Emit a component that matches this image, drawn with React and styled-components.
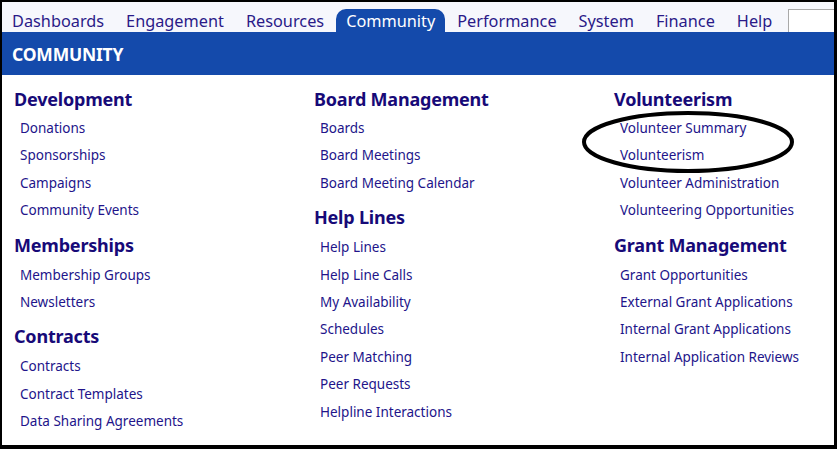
import styled, { createGlobalStyle } from 'styled-components';

const GlobalStyle = createGlobalStyle`
  html, body {
    margin: 0;
    padding: 0;
    background: #ffffff;
  }
  body {
    font-family: 'Noto Sans', 'Open Sans', sans-serif;
  }
`;

const Frame = styled.div`
  position: relative;
  box-sizing: border-box;
  width: 837px;
  height: 449px;
  border-top: 2px solid #000;
  border-left: 2px solid #000;
  border-right: 3px solid #000;
  border-bottom: 4px solid #000;
  overflow: hidden;
`;

const NavBar = styled.div`
  display: flex;
  align-items: flex-end;
  height: 30px;
  background: #f6f7fc;
`;

const NavItem = styled.div`
  height: 23px;
  padding: 0 10px;
  margin-right: 2px;
  font-size: 16.3px;
  line-height: 24px;
  color: ${(p) => (p.$active ? '#ffffff' : '#2a1a88')};
  background: ${(p) => (p.$active ? '#144aab' : 'transparent')};
  border-radius: 10px 10px 0 0;
  white-space: nowrap;
`;

const Search = styled.input`
  margin-left: auto;
  width: 46px;
  height: 23px;
  box-sizing: border-box;
  border: 1px solid #a9a9a9;
  border-right: none;
  border-bottom: none;
  background: #fff;
  outline: none;
`;

const Banner = styled.div`
  height: 43px;
  background: #144aab;
  display: flex;
  align-items: center;
  padding-left: 10px;
  color: #fff;
  font-weight: 700;
  font-size: 17.5px;
  letter-spacing: -0.2px;
`;

const Columns = styled.div`
  display: grid;
  grid-template-columns: 300px 300px 300px;
  padding: 12px 0 0 12px;
`;

const Column = styled.div`
  display: flex;
  flex-direction: column;
`;

const Heading = styled.div`
  font-size: 18px;
  font-weight: 700;
  line-height: 24px;
  color: #170a78;
  margin-top: ${(p) => (p.$first ? '0' : '8px')};
  margin-bottom: ${(p) => (p.$first ? '4px' : '5px')};
  letter-spacing: -0.2px;
`;

const LinkItem = styled.a`
  display: block;
  padding-left: 6px;
  font-size: 13.5px;
  line-height: 27.4px;
  color: #22148a;
  text-decoration: none;
`;

const Annotation = styled.svg`
  position: absolute;
  left: 578px;
  top: 106px;
  pointer-events: none;
`;

const columns = [
  [
    { title: 'Development', links: ['Donations', 'Sponsorships', 'Campaigns', 'Community Events'] },
    { title: 'Memberships', links: ['Membership Groups', 'Newsletters'] },
    { title: 'Contracts', links: ['Contracts', 'Contract Templates', 'Data Sharing Agreements'] },
  ],
  [
    { title: 'Board Management', links: ['Boards', 'Board Meetings', 'Board Meeting Calendar'] },
    {
      title: 'Help Lines',
      links: ['Help Lines', 'Help Line Calls', 'My Availability', 'Schedules', 'Peer Matching', 'Peer Requests', 'Helpline Interactions'],
    },
  ],
  [
    {
      title: 'Volunteerism',
      links: ['Volunteer Summary', 'Volunteerism', 'Volunteer Administration', 'Volunteering Opportunities'],
    },
    {
      title: 'Grant Management',
      links: ['Grant Opportunities', 'External Grant Applications', 'Internal Grant Applications', 'Internal Application Reviews'],
    },
  ],
];

const tabs = ['Dashboards', 'Engagement', 'Resources', 'Community', 'Performance', 'System', 'Finance', 'Help'];

const App = () => {
  return (
    <Frame>
      <GlobalStyle />
      <NavBar>
        {tabs.map((t) => (
          <NavItem key={t} $active={t === 'Community'}>
            {t}
          </NavItem>
        ))}
        <Search />
      </NavBar>
      <Banner>COMMUNITY</Banner>
      <Columns>
        {columns.map((col, i) => (
          <Column key={i}>
            {col.map((sec, j) => (
              <div key={sec.title}>
                <Heading $first={j === 0}>{sec.title}</Heading>
                {sec.links.map((l) => (
                  <LinkItem key={l} href="#">
                    {l}
                  </LinkItem>
                ))}
              </div>
            ))}
          </Column>
        ))}
      </Columns>
      <Annotation width="220" height="70" viewBox="0 0 220 70">
        <ellipse cx="108" cy="34" rx="104" ry="29" fill="none" stroke="#000" strokeWidth="4" />
      </Annotation>
    </Frame>
  );
};

export default App;
